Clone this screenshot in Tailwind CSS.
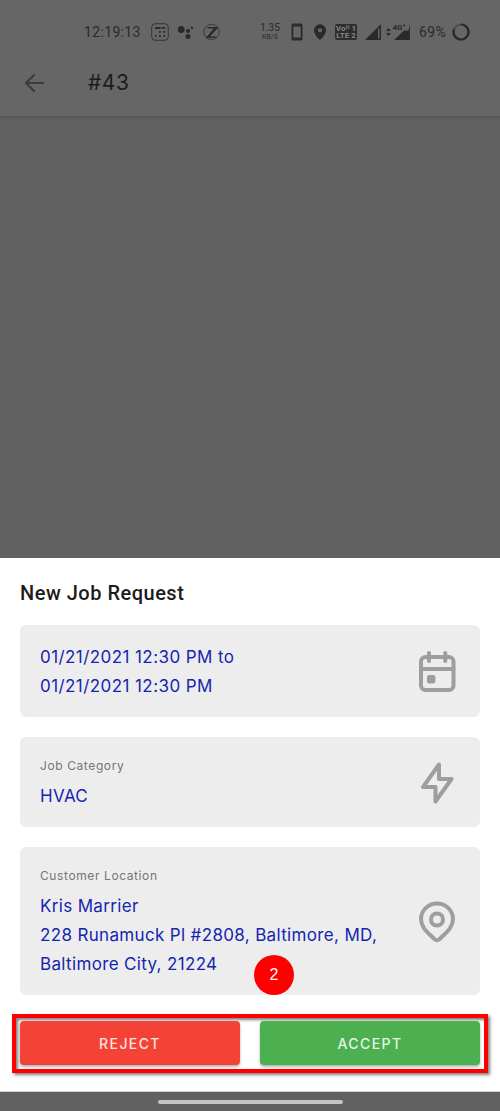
<!DOCTYPE html>
<html lang="en">
<head>
<meta charset="utf-8">
<meta name="viewport" content="width=device-width, initial-scale=1">
<title>New Job Request</title>
<script src="https://cdn.jsdelivr.net/npm/@tailwindcss/browser@4"></script>
</head>
<body class="flex min-h-screen flex-col bg-[#616161] font-['Inter',sans-serif] text-[#1c1c1c]">
  <header class="bg-[#666666] shadow-[0_1px_3px_rgba(0,0,0,0.2)]">
    <!-- Status bar -->
    <div class="flex h-[50px] items-center justify-between pt-[14px] pr-[30px] pl-[84px] font-['Roboto',sans-serif] text-[#2a2a2a]">
      <div class="flex items-center gap-2">
        <span class="w-[59px] text-sm tracking-wide">12:19:13</span>
        <svg class="size-[18px]" viewBox="0 0 18 18" fill="currentColor" aria-hidden="true"><rect x=".7" y=".7" width="16.6" height="16.6" rx="3.5" fill="none" stroke="currentColor" stroke-width=".8"/><path d="M4 4h5.500v2H4zM10.500 4h1.500v2H10.500zM12.500 4h1.800v2H12.500zM8 8h1.800v1.800H8zM12.300 8h1.800v1.800H12.300zM4 12h1.800v1.800H4zM8 12h1.800v1.800H8zM12.300 12h1.800v1.800H12.300z"/></svg>
        <svg class="size-[18px]" viewBox="0 0 18 18" fill="currentColor" aria-hidden="true"><circle cx="4.2" cy="6.5" r="3.4"/><circle cx="11" cy="8" r="2.1"/><circle cx="11" cy="13.5" r="2.5"/><circle cx="15" cy="4.7" r="1.2"/></svg>
        <svg class="size-[18px]" viewBox="0 0 18 18" aria-hidden="true"><circle cx="8.5" cy="9" r="7.700" fill="none" stroke="currentColor" stroke-width=".7"/><path d="M5 4h10.500L7 13.500h6.500L12 15H2.500L11 5.500H4z" fill="currentColor"/></svg>
      </div>
      <div class="flex items-center gap-2">
        <span class="flex w-[22px] flex-col items-center whitespace-nowrap text-[10px] leading-[10px]">1.35<span class="text-[7px] leading-[8px]">KB/S</span></span>
        <svg class="h-[18px] w-[14px]" viewBox="0 0 14 18" aria-hidden="true"><path fill="currentColor" fill-rule="evenodd" d="M4 .5h8q1.500 0 1.500 1.500v14q0 1.500-1.500 1.500H4q-1.500 0-1.500-1.500V2Q2.500.5 4 .5zM4.300 3.500v11h7.400v-11z"/></svg>
        <svg class="ml-[2px] h-[18px] w-[14px]" viewBox="0 0 14 18" aria-hidden="true"><path fill="currentColor" fill-rule="evenodd" d="M7 1.200a6 6 0 0 0-6 6C1 12 7 17 7 17s6-5 6-9.800a6 6 0 0 0-6-6zm0 4a2.100 2.100 0 1 1 0 4.200 2.100 2.100 0 0 1 0-4.200z"/></svg>
        <span class="flex h-4 w-[22px] flex-col justify-center overflow-hidden rounded-xs bg-[#2d2d2d] text-center text-[8px] leading-[7px] font-bold whitespace-nowrap text-[#858585]"><span>Vo⁾⁾ 1</span><span>LTE 2</span></span>
        <svg class="size-4" viewBox="0 0 16 16" aria-hidden="true"><path fill="currentColor" fill-rule="evenodd" d="M16 0v16H0zM13 4.500v10h1.500v-10z"/></svg>
        <svg class="-ml-1 h-[18px] w-[26px]" viewBox="0 0 26 18" fill="currentColor" aria-hidden="true"><path d="M3.500 5L6 8H1zM3.500 13L6 10H1zM25 1v16H9L19 7.500h4.500z"/><text x="7.500" y="6.800" font-family="Roboto, sans-serif" font-size="8" font-weight="700">4G⁺</text></svg>
        <span class="w-[27px] text-sm tracking-wide">69%</span>
        <svg class="ml-[-2px] size-[18px]" viewBox="0 0 18 18" fill="none" stroke-width="2.200" aria-hidden="true"><circle cx="9" cy="9" r="7.500" stroke="#4d4d4d"/><path d="M9 1.500A7.500 7.500 0 1 1 2 6.500" stroke="#292929"/></svg>
      </div>
    </div>
    <!-- App bar -->
    <div class="flex h-[66px] items-center gap-[42px] pl-[22px]">
      <button type="button" aria-label="Back" class="text-[#3c3c3c]">
        <svg class="size-6" viewBox="0 0 24 24" fill="none" stroke="currentColor" stroke-width="2.200" stroke-linecap="round" stroke-linejoin="round" aria-hidden="true"><path d="M21 12H4M12 4L4 12l8 8"/></svg>
      </button>
      <h1 class="text-[21px] tracking-wide">#43</h1>
    </div>
  </header>

  <main class="mt-auto bg-white pt-5 pb-[18px]">
    <h2 class="px-5 pt-px font-['Roboto',sans-serif] text-xl leading-[29px] font-medium tracking-wide">New Job Request</h2>

    <div class="mt-[17px] flex flex-col gap-5 px-5">
      <section class="flex items-center justify-between rounded-md bg-[#ededed] pt-[18px] pr-5 pb-4 pl-5">
        <p class="text-[17px] leading-[29px] tracking-wide text-[#1525b0]">01/21/2021 12:30 PM to<br>01/21/2021 12:30 PM</p>
        <svg class="mr-px size-11 shrink-0" viewBox="0 0 44 44" fill="none" stroke="#9e9e9e" stroke-width="4" stroke-linecap="round" aria-hidden="true"><rect x="6" y="7" width="32.500" height="33" rx="4.500"/><path d="M6 19h32.500M14 3v8M30.300 3v8"/><rect x="12" y="25" width="8.400" height="8.600" rx="2" fill="#9e9e9e" stroke="none"/></svg>
      </section>

      <section class="flex items-center justify-between rounded-md bg-[#ededed] pt-[19px] pr-5 pb-4 pl-5">
        <div>
          <h3 class="text-xs leading-5 tracking-wider text-[#757575]">Job Category</h3>
          <p class="mt-[6px] text-[17px] leading-[29px] tracking-[0.02em] text-[#1525b0]">HVAC</p>
        </div>
        <svg class="mr-px size-11 shrink-0" viewBox="0 0 44 44" fill="none" stroke="#9e9e9e" stroke-width="4" stroke-linejoin="round" aria-hidden="true"><path d="M24 2.500L8 25h12.500v14.500L36.500 17H24z"/></svg>
      </section>

      <section class="relative flex items-center justify-between rounded-md bg-[#ededed] pt-[19px] pr-5 pb-4 pl-5">
        <div>
          <h3 class="text-xs leading-5 tracking-wider text-[#757575]">Customer Location</h3>
          <p class="mt-[6px] text-[17px] leading-[29px] tracking-[0.02em] text-[#1525b0]">Kris Marrier<br>228 Runamuck Pl #2808, Baltimore, MD,<br>Baltimore City, 21224</p>
        </div>
        <svg class="mr-px size-11 shrink-0" viewBox="0 0 44 44" fill="none" stroke="#9e9e9e" stroke-width="4" stroke-linejoin="round" aria-hidden="true"><path d="M22 2.500C13 2.500 6 9.500 6 18c0 9 7.500 14 13.500 20.200q2.500 2 5 0C30.500 32 38 27 38 18 38 9.500 31 2.500 22 2.500z"/><circle cx="22" cy="18.500" r="6"/></svg>
        <span class="absolute bottom-0 left-[234px] flex size-10 items-center justify-center rounded-full bg-[#ff0000] font-['Liberation_Sans',sans-serif] text-base text-white">2</span>
      </section>
    </div>

    <div class="mx-3 mt-[19px] grid grid-cols-2 gap-5 border-4 border-[#ff0000] px-1 pt-[3px] pb-1 shadow-[2px_2px_3px_rgba(0,0,0,0.5),inset_2px_2px_3px_rgba(0,0,0,0.5)]">
      <button type="button" class="h-11 rounded bg-[#f44336] pt-px text-sm font-medium tracking-widest text-[#fbe3e1] shadow-[0_2px_3px_rgba(0,0,0,0.3)]">REJECT</button>
      <button type="button" class="h-11 rounded bg-[#4caf50] pt-px text-sm font-medium tracking-widest text-[#e6f5e7] shadow-[0_2px_3px_rgba(0,0,0,0.3)]">ACCEPT</button>
    </div>
  </main>

  <!-- Gesture bar -->
  <footer class="flex h-5 items-center justify-center border-t border-[#cfcfcf] bg-[#616161]">
    <div class="h-1 w-[37%] rounded-full bg-[#c4c4c4]"></div>
  </footer>
</body>
</html>
